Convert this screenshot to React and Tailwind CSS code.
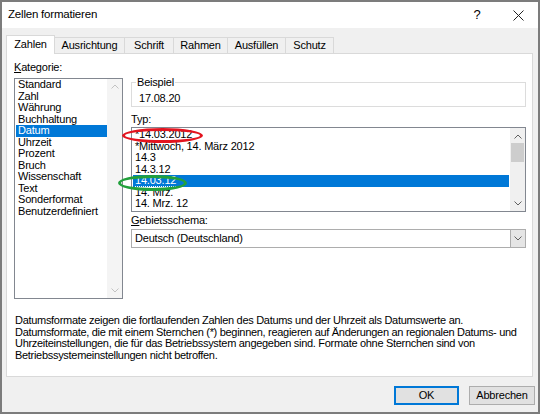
import React from "react";

const categories = [
  "Standard",
  "Zahl",
  "Währung",
  "Buchhaltung",
  "Datum",
  "Uhrzeit",
  "Prozent",
  "Bruch",
  "Wissenschaft",
  "Text",
  "Sonderformat",
  "Benutzerdefiniert",
];

const types = [
  "*14.03.2012",
  "*Mittwoch, 14. März 2012",
  "14.3",
  "14.3.12",
  "14.03.12",
  "14. Mrz.",
  "14. Mrz. 12",
];

const tabs = [
  { name: "Zahlen", w: "w-[49px]" },
  { name: "Ausrichtung", w: "w-[70px]" },
  { name: "Schrift", w: "w-[49px]" },
  { name: "Rahmen", w: "w-[54px]" },
  { name: "Ausfüllen", w: "w-[58px]" },
  { name: "Schutz", w: "w-[48px]" },
];

// small chevrons used by scrollbars and the combo box
const Chevron = ({ up, color = "#606060" }) => (
  <svg width="8" height="5" viewBox="0 0 8 5">
    <polyline
      points={up ? "0.5,4.5 4,1 7.5,4.5" : "0.5,0.5 4,4 7.5,0.5"}
      fill="none"
      stroke={color}
      strokeWidth="1"
    />
  </svg>
);

const App = () => {
  return (
    <div className="w-[540px] h-[414px] overflow-hidden bg-[#f0f0f0] border-2 border-[#7c7c7c] font-['Liberation_Sans',Arial,sans-serif] text-[11px] tracking-[-0.2px] text-black flex flex-col">
      {/* Title bar */}
      <div className="h-[26px] bg-white flex items-center pl-[6px] shrink-0">
        <span className="text-[11.5px]">Zellen formatieren</span>
        <span className="ml-auto w-[12px] text-center text-[13px] mr-[30px]">?</span>
        <svg width="11" height="11" viewBox="0 0 11 11" className="mr-[14px]">
          <path d="M0.5 0.5 L10.5 10.5 M10.5 0.5 L0.5 10.5" stroke="#222" strokeWidth="1" />
        </svg>
      </div>

      {/* Tabs */}
      <div className="flex items-end h-[18px] mt-[7px] pl-[4px] relative z-10">
        {tabs.map((t, i) =>
          i === 0 ? (
            <div
              key={t.name}
              className={`${t.w} h-[19px] mb-[-1px] bg-white border border-b-0 border-[#d9d9d9] flex items-center justify-center pb-[1px]`}
            >
              {t.name}
            </div>
          ) : (
            <div
              key={t.name}
              className={`${t.w} h-[16px] bg-[#f0f0f0] border-t border-r border-[#d9d9d9] flex items-center justify-center`}
            >
              {t.name}
            </div>
          )
        )}
      </div>

      {/* Panel */}
      <div className="relative ml-[4px] w-[527px] h-[324px] bg-white border border-[#d9d9d9] pl-[7px] pt-[7px]">
        <div className="flex">
          {/* Kategorie */}
          <div className="w-[109px]">
            <div className="leading-[13px]">
              <span className="underline">K</span>ategorie:
            </div>
            <div className="mt-[4px] h-[221px] border border-[#828790] flex">
              <div className="flex-1 pl-[1px]">
                {categories.map((c) =>
                  c === "Datum" ? (
                    <div key={c} className="h-[11.5px] leading-[11.5px] bg-[#0078d7] text-white pl-[2px]">
                      {c}
                    </div>
                  ) : (
                    <div key={c} className="h-[11.5px] leading-[11.5px] pl-[2px]">
                      {c}
                    </div>
                  )
                )}
              </div>
              <div className="w-[15px] bg-[#f4f4f4] flex flex-col items-center justify-between py-[5px]">
                <Chevron up color="#c2c2c2" />
                <Chevron color="#c2c2c2" />
              </div>
            </div>
          </div>

          {/* Right column */}
          <div className="ml-[8px] w-[395px]">
            <fieldset className="mt-[15px] border border-[#dcdcdc] h-[31px] pl-[4px]">
              <legend className="leading-[13px] px-[1px]">Beispiel</legend>
              <div className="leading-[13px] pl-[3px] pt-[3px]">17.08.20</div>
            </fieldset>

            <div className="mt-[6px] leading-[13px]">Typ:</div>
            <div className="mt-[1px] h-[85px] border border-[#828790] flex">
              <div className="flex-1 pt-[1px] px-[1px]">
                {types.map((t) =>
                  t === "14.03.12" ? (
                    <div key={t} className="h-[11.5px] leading-[11.5px] bg-[#0078d7] text-white pl-[2px]">
                      <span className="border-b border-dotted border-white">{t}</span>
                    </div>
                  ) : (
                    <div key={t} className="h-[11.5px] leading-[11.5px] pl-[2px]">
                      {t}
                    </div>
                  )
                )}
              </div>
              <div className="w-[15px] bg-[#f0f0f0] flex flex-col items-center pt-[6px] pb-[5px]">
                <Chevron up />
                <div className="mt-[4px] w-[13px] h-[19px] bg-[#cdcdcd]" />
                <div className="flex-1" />
                <Chevron />
              </div>
            </div>

            <div className="mt-[2px] leading-[13px]">
              <span className="underline">G</span>ebietsschema:
            </div>
            <div className="mt-[2px] h-[19px] border border-[#adadad] flex items-center">
              <span className="pl-[3px] flex-1">Deutsch (Deutschland)</span>
              <div className="w-[15px] h-full bg-[#e5e5e5] border-l border-[#adadad] flex items-center justify-center">
                <Chevron />
              </div>
            </div>
          </div>
        </div>

        {/* Description */}
        <div className="mt-[16px] pl-[1px] leading-[11.6px] whitespace-nowrap tracking-[-0.3px]">
          <div>Datumsformate zeigen die fortlaufenden Zahlen des Datums und der Uhrzeit als Datumswerte an.</div>
          <div>Datumsformate, die mit einem Sternchen (*) beginnen, reagieren auf Änderungen an regionalen Datums- und</div>
          <div>Uhrzeiteinstellungen, die für das Betriebssystem angegeben sind. Formate ohne Sternchen sind von</div>
          <div>Betriebssystemeinstellungen nicht betroffen.</div>
        </div>

        {/* Annotation ellipses */}
        <div className="absolute left-[115px] top-[74px] w-[81px] h-[15px] rounded-[50%] border-[3px] border-[#e3141f]" />
        <div className="absolute left-[111px] top-[121px] w-[69px] h-[16px] rounded-[50%] border-[3px] border-[#22a03c]" />
      </div>

      {/* Buttons */}
      <div className="flex justify-end gap-[10px] mt-[9px] pr-[3px]">
        <button className="w-[65px] h-[19px] bg-[#e1e1e1] border border-[#0078d7] shadow-[inset_0_0_0_1px_#0078d7] text-[11px]">
          OK
        </button>
        <button className="w-[66px] h-[19px] bg-[#e1e1e1] border border-[#adadad] text-[11px]">
          Abbrechen
        </button>
      </div>
    </div>
  );
};

export default App;
